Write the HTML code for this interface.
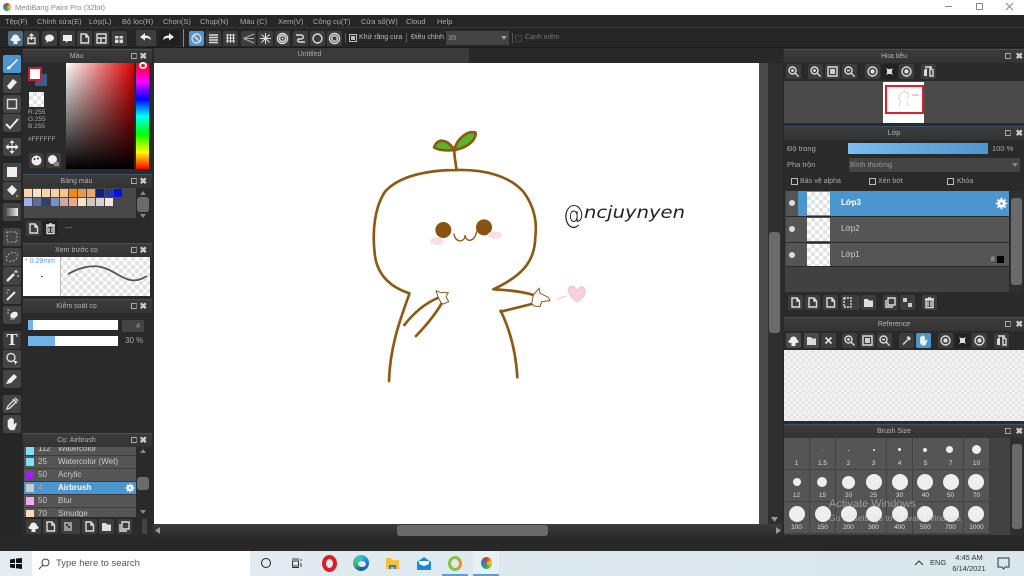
<!DOCTYPE html>
<html lang="vi"><head><meta charset="utf-8"><title>MediBang Paint Pro</title>
<style>
html,body{margin:0;padding:0;width:1024px;height:576px;overflow:hidden;background:#282828}
body{position:relative;font-family:"Liberation Sans","Noto Sans CJK SC",sans-serif;font-size:7.5px;color:#aaa}
div,span,svg{position:absolute;box-sizing:border-box}
.t{white-space:nowrap;line-height:10px}
.pt{background:linear-gradient(#3b3b3b,#343434);border-top:1px solid #3c5266;height:14px;color:#b5b5b5;text-align:center;line-height:13px;font-size:7px;padding-right:22px}
.pt.r{padding-right:20px}
.b{width:15px;height:15px;background:#3d3d3d;border-radius:2px}
.b svg{left:1px;top:1px;width:13px;height:13px}
.tb{left:3px;width:18px;height:18px;background:#444;border-radius:2px}
.tb svg{left:1px;top:1px;width:16px;height:16px}
.ic{fill:none;stroke:#ddd;stroke-width:1.4}
.ck{background-color:#fff;background-image:linear-gradient(45deg,#e2e2e2 25%,transparent 25%,transparent 75%,#e2e2e2 75%),linear-gradient(45deg,#e2e2e2 25%,transparent 25%,transparent 75%,#e2e2e2 75%);background-size:8px 8px;background-position:0 0,4px 4px}
.ck2{background-color:#f2f2f2;background-image:linear-gradient(45deg,#e6e6e6 25%,transparent 25%,transparent 75%,#e6e6e6 75%),linear-gradient(45deg,#e6e6e6 25%,transparent 25%,transparent 75%,#e6e6e6 75%);background-size:6px 6px;background-position:0 0,3px 3px}
.c{width:8px;height:8px}
.row{left:24px;width:112px;height:13px;background:#555;border-bottom:1px solid #3d3d3d;color:#ccc;font-size:8px;line-height:12px}
.row i{position:absolute;left:2px;top:2px;width:8px;height:8px}
.row b{position:absolute;left:14px;font-weight:normal}
.row u{position:absolute;left:34px;text-decoration:none;white-space:nowrap}
.lay{left:786px;width:223px;background:#555;border-bottom:1px solid #2a2a2a;color:#ccc;font-size:8px}
.eye{left:3px;width:6px;height:6px;border-radius:50%;background:#ddd}
.th{left:21px;top:1px;width:23px;height:23px}
.sb{background:#2f2f2f}
.th2{background:#6a6a6a;border-radius:3px}
.cell{width:25px;height:31px;background:#555;color:#ddd;font-size:6.5px;text-align:center}
.cell i{position:absolute;background:#eee;border-radius:50%}
.cell b{position:absolute;left:0;right:0;bottom:1px;font-weight:normal;line-height:8px}
.pop{right:15px;top:3px;width:6px;height:6px;border:1px solid #aaa;border-right-color:#777}
.xx{right:5px;top:0;color:#ccc;font-size:9px;line-height:12px;font-weight:bold}
.r .pop{right:13px}
.r .xx{right:1px}
.cb{width:7px;height:7px;border:1px solid #bbb}
</style></head><body>
<svg width="0" height="0" style="left:0;top:0">
<defs>
<symbol id="page" viewBox="0 0 13 13"><path class="ic" d="M3 2h5l2.500 3v6H3zM8 2v3h2.500"/></symbol>
<symbol id="folder" viewBox="0 0 13 13"><path d="M2 3h4l1 1.500h4V11H2z" fill="#ddd"/></symbol>
<symbol id="trash" viewBox="0 0 13 13"><path class="ic" d="M3 4h7v7.500H3zM2 3h9M5 2h3M5 5.500v4.500M8 5.500v4.500"/></symbol>
<symbol id="zin" viewBox="0 0 13 13"><circle class="ic" cx="5.500" cy="5.500" r="3.500"/><path class="ic" d="M8 8l3.500 3.500M4 5.500h3M5.500 4v3"/></symbol>
<symbol id="zout" viewBox="0 0 13 13"><circle class="ic" cx="5.500" cy="5.500" r="3.500"/><path class="ic" d="M8 8l3.500 3.500M4 5.500h3"/></symbol>
<symbol id="fit" viewBox="0 0 13 13"><path class="ic" d="M2 2h9v9H2z"/><path d="M4 4h5v5H4z" fill="#ccc"/></symbol>
<symbol id="rot" viewBox="0 0 13 13"><circle class="ic" cx="6.500" cy="6.500" r="4.500"/><circle cx="6.500" cy="6.500" r="2.200" fill="#ddd"/></symbol>
<symbol id="full" viewBox="0 0 13 13"><path d="M3 3l2 1h3l2-1-1 2v3l1 2-2-1H5l-2 1 1-2V5z" fill="#ddd"/></symbol>
<symbol id="flip" viewBox="0 0 13 13"><path d="M2 5l3-2v8H2z" fill="#ddd"/><path class="ic" d="M8 3l3 2v6H8zM3 2h7" stroke-width="1"/></symbol>
<symbol id="cloud" viewBox="0 0 13 13"><path d="M3 6a3.500 3.500 0 0 1 7 0c2 0 2 3 0 3H8.500v3h-4V9H3C1 9 1 6 3 6z" fill="#eee"/></symbol>
<symbol id="hand" viewBox="0 0 13 13"><path d="M3 6V3h1.200v2.500V2h1.300v3.500V1.500h1.300v4V2.500h1.200V7l1.500-1.500 1 .7L8.500 11.500H5L3 9z" fill="#eee"/></symbol>
<symbol id="gear" viewBox="0 0 13 13"><circle cx="6.500" cy="6.500" r="4" fill="#fff"/><path d="M6.500 .8v11.400M.8 6.500h11.400M2.500 2.500l8 8M10.500 2.500l-8 8" stroke="#fff" stroke-width="1.800"/><circle cx="6.500" cy="6.500" r="1.300" fill="#4c96d0"/></symbol>
<symbol id="x" viewBox="0 0 13 13"><path d="M3.500 3.500l6 6M9.500 3.500l-6 6" stroke="#ddd" stroke-width="1.800"/></symbol>
<symbol id="drop" viewBox="0 0 13 13"><path class="ic" d="M3 10.500l5.500-5.500M7 3l3 3M8 2.500l2.500 2.500" /></symbol>
</defs></svg>

<!-- title bar -->
<div style="left:0;top:0;width:1024px;height:15px;background:#fff"></div>
<div style="left:3px;top:3px;width:8px;height:8px;border-radius:50%;background:conic-gradient(#d33,#ec3,#3a4,#28c,#d33)"></div>
<div class="t" style="left:15px;top:3px;color:#8a8a8a;font-size:7.5px">MediBang Paint Pro (32bit)</div>
<div style="left:945px;top:6px;width:7px;height:1px;background:#888"></div>
<div style="left:976px;top:3px;width:7px;height:7px;border:1px solid #888"></div>
<svg style="left:1005px;top:2px;width:9px;height:9px"><path d="M1 1l7 7M8 1L1 8" stroke="#888" fill="none"/></svg>

<!-- menu -->
<div style="left:0;top:15px;width:1024px;height:13px;background:#262626;border-bottom:1px solid #363636"></div>
<div class="t" style="left:5px;top:17px">Tệp(F)</div>
<div class="t" style="left:37px;top:17px">Chỉnh sửa(E)</div>
<div class="t" style="left:89px;top:17px">Lớp(L)</div>
<div class="t" style="left:122px;top:17px">Bộ lọc(R)</div>
<div class="t" style="left:163px;top:17px">Chọn(S)</div>
<div class="t" style="left:200px;top:17px">Chụp(N)</div>
<div class="t" style="left:240px;top:17px">Màu (C)</div>
<div class="t" style="left:278px;top:17px">Xem(V)</div>
<div class="t" style="left:313px;top:17px">Công cụ(T)</div>
<div class="t" style="left:361px;top:17px">Cửa sổ(W)</div>
<div class="t" style="left:406px;top:17px">Cloud</div>
<div class="t" style="left:437px;top:17px">Help</div>

<!-- toolbar -->
<div style="left:0;top:28px;width:1024px;height:20px;background:#262626;border-bottom:1px solid #1c1c1c"></div>
<div class="b" style="left:8px;top:31px;background:#4a6d8c"><svg><use href="#cloud"/></svg></div>
<div class="b" style="left:24px;top:31px"><svg><path class="ic" d="M3 6h7v5.500H3zM6.500 8V2M4.500 4l2-2 2 2"/></svg></div>
<div class="b" style="left:42px;top:31px"><svg><ellipse cx="6.500" cy="6" rx="4.500" ry="3.500" fill="#eee"/><path d="M4 8l-1 3 3-2z" fill="#eee"/></svg></div>
<div class="b" style="left:60px;top:31px"><svg><path d="M2 3h9v6H7l-2 2V9H2z" fill="#eee"/></svg></div>
<div class="b" style="left:77px;top:31px"><svg><use href="#page"/></svg></div>
<div class="b" style="left:94px;top:31px"><svg><path class="ic" d="M2 2h9v9H2zM2 6h9M6 6v5" stroke-width="1"/></svg></div>
<div class="b" style="left:112px;top:31px"><svg><path d="M2 4h8v7H2z" fill="#ddd"/><path d="M2 7h8M6 4v7" stroke="#333"/></svg></div>
<div class="b" style="left:136px;top:30px;width:20px;height:16px"><svg style="left:3px"><path d="M1 6l5-4v2.500c3 0 6 1 6 5-1-2-3-2.500-6-2.500V9.500z" fill="#eee"/></svg></div>
<div class="b" style="left:159px;top:30px;width:20px;height:16px;background:#1f1f1f"><svg style="left:3px"><path d="M12 6L7 2v2.500c-3 0-6 1-6 5 1-2 3-2.500 6-2.500V9.500z" fill="#eee"/></svg></div>
<div style="left:183px;top:29px;width:1px;height:18px;background:#4c96d0"></div>
<div class="b" style="left:189px;top:31px;background:#4c96d0"><svg><circle class="ic" cx="6.500" cy="6.500" r="4.500"/><path class="ic" d="M3.500 3.500l6 6"/></svg></div>
<div class="b" style="left:206px;top:31px"><svg><path class="ic" d="M2 3h9M2 5.500h9M2 8h9M2 10.500h9" stroke="#aaa" stroke-width="1"/></svg></div>
<div class="b" style="left:223px;top:31px"><svg><path d="M2 3h9M2 6h9M2 9h9M3.500 2v9M6.500 2v9M9.500 2v9" stroke="#ddd"/></svg></div>
<div class="b" style="left:241px;top:31px"><svg><path d="M1.500 6.500L12 2M1.500 6.500H12M1.500 6.500L12 11" stroke="#aaa" fill="none"/></svg></div>
<div class="b" style="left:258px;top:31px"><svg><path d="M6.500 1v11M1 6.500h11M2.500 2.500l8 8M10.500 2.500l-8 8" stroke="#ddd"/></svg></div>
<div class="b" style="left:275px;top:31px"><svg><circle cx="6.500" cy="6.500" r="5" class="ic" stroke-width="1"/><circle cx="6.500" cy="6.500" r="3" class="ic" stroke-width="1"/><circle cx="6.500" cy="6.500" r="1" fill="#ddd"/></svg></div>
<div class="b" style="left:293px;top:31px"><svg><path class="ic" d="M2 3h5c3 0 3 4 0 4H5c-2 0-2 3 1 3h5"/></svg></div>
<div class="b" style="left:310px;top:31px"><svg><circle class="ic" cx="6.500" cy="6.500" r="4.500" stroke-width="1.800"/></svg></div>
<div class="b" style="left:327px;top:31px"><svg><circle class="ic" cx="6.500" cy="6.500" r="5" stroke-width="1"/><circle class="ic" cx="6.500" cy="6.500" r="2.800"/></svg></div>
<div style="left:345px;top:33px;width:1px;height:10px;background:#555"></div>
<div class="cb" style="left:349px;top:34px;width:8px;height:8px"></div><div style="left:351px;top:36px;width:4px;height:4px;background:#bbb"></div>
<div class="t" style="left:359px;top:33px;color:#bbb;font-size:7px">Khử răng cưa</div>
<div style="left:406px;top:33px;width:1px;height:10px;background:#555"></div>
<div class="t" style="left:411px;top:33px;color:#bbb;font-size:7px">Điều chỉnh</div>
<div class="t" style="left:446px;top:31px;width:63px;height:14px;background:#444;padding:2px;color:#999;line-height:10px">35</div>
<svg style="left:501px;top:36px;width:6px;height:4px"><path d="M0 0h6L3 4z" fill="#999"/></svg>
<div style="left:512px;top:33px;width:1px;height:10px;background:#555"></div>
<div class="cb" style="left:515px;top:35px;border-color:#444"></div>
<div class="t" style="left:525px;top:33px;color:#777;font-size:7px">Cạnh mềm</div>

<!-- canvas -->
<div style="left:154px;top:48px;width:315px;height:15px;background:#3a3a3a;color:#aaa;text-align:center;line-height:14px;font-size:7px;padding-right:4px">Untitled</div>
<div style="left:154px;top:63px;width:605px;height:461px;background:#fff"></div>
<div style="left:759px;top:63px;width:9px;height:461px;background:#4c4a46"></div>
<div class="sb" style="left:768px;top:63px;width:14px;height:461px"></div>
<div class="th2" style="left:769px;top:232px;width:11px;height:101px"></div>
<div class="sb" style="left:152px;top:524px;width:630px;height:13px;background:linear-gradient(#3c3c3c,#2a2a2a)"></div>
<div class="th2" style="left:397px;top:525px;width:151px;height:11px"></div>
<svg style="left:155px;top:527px;width:5px;height:7px"><path d="M5 0v7L0 3.500z" fill="#999"/></svg>
<svg style="left:776px;top:527px;width:5px;height:7px"><path d="M0 0v7l5-3.500z" fill="#999"/></svg>
<svg style="left:771px;top:517px;width:7px;height:5px"><path d="M0 0h7L3.500 5z" fill="#999"/></svg>

<!-- drawing -->
<svg viewBox="0 0 1020 810" style="left:360px;top:120px;width:340px;height:270px">
<g fill="none" stroke="#8c5a12" stroke-width="8" stroke-linecap="round" stroke-linejoin="round">
<path d="M148 520C100 505 50 470 44 400C36 330 45 260 75 215C120 165 210 150 290 150C380 148 450 170 490 215C520 255 532 300 526 350C525 430 480 470 400 508C440 510 490 515 520 525"/>
<path d="M148 522C120 600 90 680 87 783"/>
<path d="M422 572C450 630 468 700 472 772"/>
<path d="M422 575L515 552" />
<path d="M133 615C160 580 195 550 235 533"/>
<path d="M168 648C195 620 225 585 245 550"/>
<path d="M289 148C288 130 282 110 283 90"/>
<path d="M283 90C265 60 235 50 222 82C235 92 265 92 283 90Z" fill="#58b52c"/>
<path d="M283 90C290 55 325 30 347 38C348 65 315 85 283 90Z" fill="#58b52c"/>
</g>
<g fill="#fff" stroke="#8c5a12" stroke-width="3" stroke-linejoin="round">
<path d="M520 526L537 504L540 520L565 532L570 542L545 545L540 560L522 558L515 550Z"/>
<path d="M235 533L228 512L243 518L265 518L258 530L266 545L250 552L243 548Z"/>
</g>
<circle cx="250" cy="330" r="24" fill="#8a5210"/>
<circle cx="372" cy="322" r="24" fill="#8a5210"/>
<path d="M282 342C285 368 315 370 315 345C318 370 345 365 350 335" fill="none" stroke="#8c5a12" stroke-width="4" stroke-linecap="round"/>
<ellipse cx="231" cy="364" rx="21" ry="11" fill="#fbdfe3"/>
<ellipse cx="405" cy="345" rx="22" ry="11" fill="#fbdfe3"/>
<path d="M650 545C620 525 618 500 635 498C645 498 650 508 651 514C655 498 675 492 676 515C675 530 660 545 650 545Z" fill="#f8d0da" stroke="#f3bccb" stroke-width="2"/>
<path d="M590 538L618 528" stroke="#f3bccb" stroke-width="3"/>
</svg>
<svg style="left:555px;top:190px;width:140px;height:50px"><text x="8" y="33" font-family="'DejaVu Sans',sans-serif" font-weight="200" font-size="26" fill="#222" textLength="21" lengthAdjust="spacingAndGlyphs">@</text><text x="29" y="28" font-family="'DejaVu Sans',sans-serif" font-weight="200" font-style="italic" font-size="17" fill="#222" textLength="101" lengthAdjust="spacingAndGlyphs">ncjuynyen</text></svg>

<!-- tool strip -->
<div style="left:0;top:48px;width:22px;height:489px;background:#262626"></div>
<div class="tb" style="top:55px;background:#4c96d0"><svg viewBox="0 0 16 16"><path d="M3 13c0-2 1-3 3-3l7-7 1 1-7 7c0 2-2 3-4 2z" fill="#fff"/></svg></div>
<div class="tb" style="top:75px"><svg viewBox="0 0 16 16"><path d="M3 10l6-7 4 3-6 7H5z" fill="#eee"/></svg></div>
<div class="tb" style="top:95px"><svg viewBox="0 0 16 16"><path class="ic" d="M3.500 3.500h9v9h-9z"/></svg></div>
<div class="tb" style="top:114px"><svg viewBox="0 0 16 16"><path d="M2 9l4 4 8-9" fill="none" stroke="#eee" stroke-width="2"/></svg></div>
<div class="tb" style="top:138px"><svg viewBox="0 0 16 16"><path d="M8 1l2.500 3h-2v3h3V5l3 3-3 3V9h-3v3h2L8 15l-2.500-3h2V9h-3v2l-3-3 3-3v2h3V4h-2z" fill="#eee"/></svg></div>
<div class="tb" style="top:163px"><svg viewBox="0 0 16 16"><path d="M3 3h10v10H3z" fill="#eee"/></svg></div>
<div class="tb" style="top:182px"><svg viewBox="0 0 16 16"><path d="M3 7l5-5 5 5-4 5H8z" fill="#eee"/><path d="M13 11c1 2 1 3 0 3s-1-1 0-3z" fill="#e9a33a"/></svg></div>
<div class="tb" style="top:203px"><svg viewBox="0 0 16 16"><defs><linearGradient id="g1"><stop offset="0" stop-color="#555"/><stop offset="1" stop-color="#eee"/></linearGradient></defs><path d="M2 4h12v8H2z" fill="url(#g1)"/></svg></div>
<div class="tb" style="top:228px"><svg viewBox="0 0 16 16"><path d="M3 3h10v10H3z" fill="none" stroke="#aaa" stroke-dasharray="2 1.500"/></svg></div>
<div class="tb" style="top:248px"><svg viewBox="0 0 16 16"><ellipse cx="8" cy="8" rx="6" ry="4" transform="rotate(-25 8 8)" fill="none" stroke="#aaa" stroke-dasharray="2 1.500"/></svg></div>
<div class="tb" style="top:267px"><svg viewBox="0 0 16 16"><path d="M3 13l7-7" stroke="#eee" stroke-width="2.500"/><path d="M12 2v2M10 4h4M14 7v2" stroke="#eee"/></svg></div>
<div class="tb" style="top:286px"><svg viewBox="0 0 16 16"><path d="M3 13l8-8" stroke="#eee" stroke-width="2"/><path d="M3 3h3M2 6h2" stroke="#aaa"/></svg></div>
<div class="tb" style="top:306px"><svg viewBox="0 0 16 16"><path d="M3 3h3M3 6h2" stroke="#aaa"/><ellipse cx="10" cy="8" rx="4" ry="3" fill="#eee" transform="rotate(-30 10 8)"/><path d="M6 12h5" stroke="#aaa"/></svg></div>
<div class="tb" style="top:331px;background:#3c3c3c;color:#eee;font:bold 17px/18px 'Liberation Serif',serif;text-align:center">T</div>
<div class="tb" style="top:350px"><svg viewBox="0 0 16 16"><circle class="ic" cx="7" cy="6.500" r="4"/><path d="M9 9l5 2-2 1 0 2z" fill="#eee"/></svg></div>
<div class="tb" style="top:370px"><svg viewBox="0 0 16 16"><path d="M2 13l2-4 6-6 3 3-6 6z" fill="#eee"/></svg></div>
<div class="tb" style="top:395px"><svg viewBox="0 0 16 16"><path class="ic" d="M3 13l1-3 6-6 2 2-6 6zM9 3l4 4M11 2l3 3"/></svg></div>
<div class="tb" style="top:415px"><svg viewBox="0 0 13 13"><use href="#hand"/></svg></div>

<!-- left col -->
<div style="left:22px;top:48px;width:131px;height:489px;background:#2a2a2a"></div>

<!-- Màu -->
<div class="pt" style="left:23px;top:49px;width:129px">Màu<span class="pop"></span><span class="xx">✖</span></div>
<div style="left:66px;top:63px;width:68px;height:106px;background:linear-gradient(to top,#000,transparent),linear-gradient(to right,#fff,#e00000)"></div>
<div style="left:136px;top:63px;width:13px;height:106px;background:linear-gradient(#f00,#f0f 17%,#00f 34%,#0ff 50%,#0f0 67%,#ff0 84%,#f00)"></div>
<div style="left:139px;top:62px;width:8px;height:7px;border:2px solid #fff;border-radius:50%"></div>
<div style="left:35px;top:74px;width:12px;height:12px;background:#3f5a8a"></div>
<div style="left:28px;top:67px;width:14px;height:14px;background:#fff;border:2px solid #c8202c"></div>
<div class="ck" style="left:29px;top:92px;width:15px;height:15px"></div>
<div class="t" style="left:28px;top:109px;color:#aaa;line-height:7px;font-size:6.5px">R:255<br>G:255<br>B:255</div>
<div class="t" style="left:28px;top:135px;color:#aaa;font-size:6.5px">#FFFFFF</div>
<div class="b" style="left:29px;top:153px"><svg><circle cx="6.500" cy="6.500" r="5" fill="#eee"/><circle cx="4.500" cy="5" r="1" fill="#333"/><circle cx="8" cy="4.500" r="1" fill="#333"/></svg></div>
<div class="b" style="left:46px;top:153px"><svg><circle cx="5.500" cy="5.500" r="4.500" fill="#eee"/><path d="M7 8h5v4H7z" fill="#888"/></svg></div>

<!-- Bảng màu -->
<div class="pt" style="left:23px;top:174px;width:129px">Bảng màu<span class="pop"></span><span class="xx">✖</span></div>
<div style="left:24px;top:188px;width:112px;height:30px;background:#484848"></div>
<div class="c" style="left:24px;top:189px;background:#fcd6a6"></div><div class="c" style="left:33px;top:189px;background:#f5e2cc"></div><div class="c" style="left:42px;top:189px;background:#f8d3a8"></div><div class="c" style="left:51px;top:189px;background:#fbd09a"></div><div class="c" style="left:60px;top:189px;background:#f9c487"></div><div class="c" style="left:69px;top:189px;background:#f28a10"></div><div class="c" style="left:78px;top:189px;background:#e59a50"></div><div class="c" style="left:87px;top:189px;background:#e8a670"></div><div class="c" style="left:96px;top:189px;background:#10207c"></div><div class="c" style="left:105px;top:189px;background:#1f3aa0"></div><div class="c" style="left:114px;top:189px;background:#0a10e0"></div>
<div class="c" style="left:24px;top:198px;background:#9cb0f0"></div><div class="c" style="left:33px;top:198px;background:#5a7098"></div><div class="c" style="left:42px;top:198px;background:#2d4468"></div><div class="c" style="left:51px;top:198px;background:#7094c4"></div><div class="c" style="left:60px;top:198px;background:#d0a8a0"></div><div class="c" style="left:69px;top:198px;background:#e8a890"></div><div class="c" style="left:78px;top:198px;background:#fce4c4"></div><div class="c" style="left:87px;top:198px;background:#ccc8c4"></div><div class="c" style="left:96px;top:198px;background:#d8d0d0"></div><div class="c" style="left:105px;top:198px;background:#fde4e4"></div>
<div class="th2" style="left:137px;top:197px;width:12px;height:15px"></div>
<svg style="left:140px;top:191px;width:6px;height:4px"><path d="M3 0l3 4H0z" fill="#888"/></svg>
<svg style="left:140px;top:214px;width:6px;height:4px"><path d="M0 0h6L3 4z" fill="#888"/></svg>
<div class="b" style="left:26px;top:221px"><svg><use href="#page"/></svg></div>
<div class="b" style="left:43px;top:221px;background:#222"><svg><use href="#trash"/></svg></div>
<div class="t" style="left:65px;top:223px">---</div>

<!-- Xem trước -->
<div class="pt" style="left:23px;top:243px;width:129px">Xem trước cọ<span class="pop"></span><span class="xx">✖</span></div>
<div class="ck" style="left:23px;top:257px;width:127px;height:39px"></div>
<div style="left:23px;top:257px;width:38px;height:39px;background:#fff;border-right:1px solid #bbb"></div>
<div class="t" style="left:25px;top:257px;color:#5a9ad0;font-size:7px">* 0.29mm</div>
<div style="left:41px;top:276px;width:2px;height:1px;background:#555"></div>
<svg style="left:61px;top:257px;width:90px;height:39px"><path d="M7 17C20 10 30 8 40 10C55 13 65 28 80 22L86 19" fill="none" stroke="#555" stroke-width="1.800"/></svg>

<!-- Kiểm soát cọ -->
<div class="pt" style="left:23px;top:299px;width:129px">Kiểm soát cọ<span class="pop"></span><span class="xx">✖</span></div>
<div style="left:28px;top:320px;width:90px;height:10px;background:#fff"></div><div style="left:28px;top:320px;width:5px;height:10px;background:#6fb5ea"></div>
<div style="left:28px;top:336px;width:90px;height:10px;background:#fff"></div><div style="left:28px;top:336px;width:27px;height:10px;background:#6fb5ea"></div>
<div class="t" style="left:122px;top:320px;width:22px;height:12px;background:#444;text-align:right;padding-right:4px;line-height:12px;color:#999">4</div>
<div class="t" style="left:125px;top:336px;color:#aaa;font-size:8px">30 %</div>

<!-- Brush list -->
<div class="pt" style="left:23px;top:433px;width:129px">Cọ: Airbrush<span class="pop"></span><span class="xx">✖</span></div>
<div class="row" style="top:447px;height:9px;overflow:hidden"><i style="background:#7fe0f5;top:0"></i><b style="top:-4px">112</b><u style="top:-4px">Watercolor</u></div>
<div class="row" style="top:456px"><i style="background:#7fe0f5"></i><b>25</b><u>Watercolor (Wet)</u></div>
<div class="row" style="top:469px"><i style="background:#a020f0"></i><b>50</b><u>Acrylic</u></div>
<div class="row" style="top:482px;background:#4c96d0;color:#fff;font-weight:bold"><i style="background:#ccc"></i><b style="color:#e88">4</b><u style="font-weight:bold">Airbrush</u></div>
<svg style="left:125px;top:483px;width:10px;height:10px" viewBox="0 0 13 13"><use href="#gear"/></svg>
<div class="row" style="top:495px"><i style="background:#f5a8f5"></i><b>50</b><u>Blur</u></div>
<div class="row" style="top:508px;height:9px;overflow:hidden;border:0"><i style="background:#fcdcc0"></i><b>70</b><u>Smudge</u></div>
<div class="th2" style="left:137px;top:477px;width:12px;height:13px"></div>
<svg style="left:140px;top:449px;width:6px;height:4px"><path d="M3 0l3 4H0z" fill="#888"/></svg>
<svg style="left:140px;top:510px;width:6px;height:4px"><path d="M0 0h6L3 4z" fill="#888"/></svg>
<div class="b" style="left:26px;top:519px"><svg><use href="#cloud"/></svg></div>
<div class="b" style="left:43px;top:519px"><svg><use href="#page"/></svg></div>
<div class="b" style="left:61px;top:519px;width:19px"><svg><path d="M2 2h8v9H2z" fill="#999"/><path d="M4 4h2v2H4zM6 6h2v2H6z" fill="#333"/></svg></div>
<div class="b" style="left:82px;top:519px"><svg><use href="#page"/></svg></div>
<div class="b" style="left:99px;top:519px"><svg><use href="#folder"/></svg></div>
<div class="b" style="left:117px;top:519px"><svg><path class="ic" d="M4 2h7v7H4zM2 4v7h7" stroke-width="1"/></svg></div>
<div style="left:142px;top:519px;width:5px;height:15px;background:#444"></div>

<!-- right col -->
<div style="left:782px;top:48px;width:242px;height:489px;background:#2a2a2a"></div>

<!-- Navigator -->
<div class="pt r" style="left:784px;top:49px;width:240px">Hoa tiêu<span class="pop"></span><span class="xx">✖</span></div>
<div class="b" style="left:786px;top:64px"><svg><use href="#zin"/></svg></div>
<div class="b" style="left:808px;top:64px"><svg><use href="#zin"/></svg></div>
<div class="b" style="left:825px;top:64px"><svg><use href="#fit"/></svg></div>
<div class="b" style="left:842px;top:64px"><svg><use href="#zout"/></svg></div>
<div class="b" style="left:865px;top:64px"><svg><use href="#rot"/></svg></div>
<div class="b" style="left:882px;top:64px;background:#222"><svg><use href="#full"/></svg></div>
<div class="b" style="left:899px;top:64px"><svg><use href="#rot"/></svg></div>
<div class="b" style="left:921px;top:64px"><svg><use href="#flip"/></svg></div>
<div style="left:784px;top:81px;width:240px;height:42px;background:#4a4a4a"></div>
<div style="left:883px;top:82px;width:41px;height:41px;background:#fff"></div>
<svg viewBox="0 0 1020 810" style="left:897px;top:88px;width:24px;height:19px"><path d="M148 520C50 470 20 260 290 150C480 150 560 350 400 508M148 522L87 783M422 572L472 772" fill="none" stroke="#c8b080" stroke-width="22"/><path d="M640 300h300" stroke="#d88" stroke-width="40"/></svg>
<div style="left:885px;top:85px;width:39px;height:29px;border:2px solid #d9202c"></div>

<!-- Layer -->
<div class="pt r" style="left:784px;top:126px;width:240px">Lớp<span class="pop"></span><span class="xx">✖</span></div>
<div class="t" style="left:787px;top:144px">Độ trong</div>
<div style="left:848px;top:143px;width:140px;height:11px;background:linear-gradient(90deg,#79bdf2,#4c96d0)"></div>
<div class="t" style="left:992px;top:144px">100 %</div>
<div class="t" style="left:787px;top:160px">Pha trộn</div>
<div class="t" style="left:849px;top:158px;width:171px;height:14px;background:#444;padding:2px 1px;color:#999;line-height:10px">Bình thường</div>
<svg style="left:1012px;top:163px;width:6px;height:4px"><path d="M0 0h6L3 4z" fill="#888"/></svg>
<div class="cb" style="left:791px;top:178px"></div><div class="t" style="left:800px;top:177px;font-size:7px">Bảo vệ alpha</div>
<div class="cb" style="left:869px;top:178px"></div><div class="t" style="left:878px;top:177px;font-size:7px">Xén bớt</div>
<div class="cb" style="left:947px;top:178px"></div><div class="t" style="left:957px;top:177px;font-size:7px">Khóa</div>
<div style="left:785px;top:191px;width:224px;height:101px;background:#414141"></div>

<div class="lay" style="top:191px;height:26px"><div class="eye" style="top:9px"></div><div style="left:12px;top:0;width:211px;height:25px;background:#4c96d0"></div><div class="ck th"></div><div class="t" style="left:55px;top:7px;color:#fff;font-weight:bold">Lớp3</div><svg style="left:209px;top:6px;width:13px;height:13px"><use href="#gear"/></svg></div>
<div class="lay" style="top:217px;height:26px"><div class="eye" style="top:9px"></div><div class="ck th"></div><div class="t" style="left:55px;top:7px">Lớp2</div></div>
<div class="lay" style="top:243px;height:24px"><div class="eye" style="top:9px"></div><div class="ck th" style="height:22px"></div><div class="t" style="left:55px;top:7px">Lớp1</div><div class="t" style="left:205px;top:12px;font-size:6.500px">8</div><div style="left:211px;top:13px;width:7px;height:7px;background:#000"></div></div>
<div class="sb" style="left:1010px;top:191px;width:13px;height:102px"></div>
<div class="th2" style="left:1011px;top:198px;width:11px;height:87px"></div>
<div class="b" style="left:788px;top:295px"><svg><use href="#page"/></svg></div>
<div class="b" style="left:805px;top:295px"><svg><use href="#page"/></svg></div>
<div class="b" style="left:823px;top:295px"><svg><use href="#page"/></svg></div>
<div class="b" style="left:841px;top:295px;width:19px"><svg><path class="ic" d="M2 2h7v9H2z" stroke-dasharray="2 1"/></svg></div>
<div class="b" style="left:861px;top:295px"><svg><use href="#folder"/></svg></div>
<div class="b" style="left:883px;top:295px"><svg><path class="ic" d="M4 2h7v7H4zM2 4v7h7" stroke-width="1"/></svg></div>
<div class="b" style="left:900px;top:295px"><svg><path d="M2 2h4v4H2zM7 7h4v4H7z" fill="#ccc"/></svg></div>
<div class="b" style="left:922px;top:295px"><svg><use href="#trash"/></svg></div>

<!-- Reference -->
<div class="pt r" style="left:784px;top:317px;width:240px">Reference<span class="pop"></span><span class="xx">✖</span></div>
<div class="b" style="left:786px;top:333px;background:#4a4a4a"><svg><use href="#cloud"/></svg></div>
<div class="b" style="left:804px;top:333px;background:#4a4a4a"><svg><use href="#folder"/></svg></div>
<div class="b" style="left:821px;top:333px"><svg><use href="#x"/></svg></div>
<div class="b" style="left:842px;top:333px"><svg><use href="#zin"/></svg></div>
<div class="b" style="left:860px;top:333px"><svg><use href="#fit"/></svg></div>
<div class="b" style="left:877px;top:333px"><svg><use href="#zout"/></svg></div>
<div class="b" style="left:899px;top:333px"><svg><use href="#drop"/></svg></div>
<div class="b" style="left:916px;top:333px;background:#4c96d0"><svg><use href="#hand"/></svg></div>
<div class="b" style="left:938px;top:333px"><svg><use href="#rot"/></svg></div>
<div class="b" style="left:955px;top:333px;background:#222"><svg><use href="#full"/></svg></div>
<div class="b" style="left:972px;top:333px"><svg><use href="#rot"/></svg></div>
<div class="b" style="left:994px;top:333px"><svg><use href="#flip"/></svg></div>
<div class="ck2" style="left:784px;top:350px;width:240px;height:71px"></div>

<!-- Brush Size -->
<div class="pt r" style="left:784px;top:424px;width:240px">Brush Size<span class="pop"></span><span class="xx">✖</span></div>
<div style="left:784px;top:438px;width:226px;height:97px;background:#424242"></div>

<div class="cell" style="left:784px;top:438px"><b>1</b></div>
<div class="cell" style="left:810px;top:438px"><i style="left:12px;top:12px;width:1px;height:1px;background:#888"></i><b>1.5</b></div>
<div class="cell" style="left:836px;top:438px"><i style="left:12px;top:12px;width:2px;height:1px;background:#aaa"></i><b>2</b></div>
<div class="cell" style="left:861px;top:438px"><i style="left:12px;top:11px;width:2px;height:2px"></i><b>3</b></div>
<div class="cell" style="left:887px;top:438px"><i style="left:11px;top:10px;width:3px;height:3px"></i><b>4</b></div>
<div class="cell" style="left:913px;top:438px"><i style="left:10px;top:10px;width:4px;height:4px"></i><b>5</b></div>
<div class="cell" style="left:938px;top:438px"><i style="left:8px;top:8px;width:7px;height:7px"></i><b>7</b></div>
<div class="cell" style="left:964px;top:438px"><i style="left:8px;top:7px;width:9px;height:9px"></i><b>10</b></div>

<div class="cell" style="left:784px;top:470px"><i style="left:9px;top:8px;width:8px;height:8px"></i><b>12</b></div>
<div class="cell" style="left:810px;top:470px"><i style="left:7px;top:7px;width:10px;height:10px"></i><b>15</b></div>
<div class="cell" style="left:836px;top:470px"><i style="left:6px;top:6px;width:13px;height:13px"></i><b>20</b></div>
<div class="cell" style="left:861px;top:470px"><i style="left:5px;top:4px;width:16px;height:16px"></i><b>25</b></div>
<div class="cell" style="left:887px;top:470px"><i style="left:5px;top:4px;width:16px;height:16px"></i><b>30</b></div>
<div class="cell" style="left:913px;top:470px"><i style="left:4px;top:4px;width:16px;height:16px"></i><b>40</b></div>
<div class="cell" style="left:938px;top:470px"><i style="left:5px;top:4px;width:16px;height:16px"></i><b>50</b></div>
<div class="cell" style="left:964px;top:470px"><i style="left:4px;top:4px;width:16px;height:16px"></i><b>70</b></div>

<div class="cell" style="left:784px;top:502px"><i style="left:5px;top:4px;width:16px;height:16px"></i><b>100</b></div>
<div class="cell" style="left:810px;top:502px"><i style="left:5px;top:4px;width:16px;height:16px"></i><b>150</b></div>
<div class="cell" style="left:836px;top:502px"><i style="left:5px;top:4px;width:16px;height:16px"></i><b>200</b></div>
<div class="cell" style="left:861px;top:502px"><i style="left:5px;top:4px;width:16px;height:16px"></i><b>300</b></div>
<div class="cell" style="left:887px;top:502px"><i style="left:5px;top:4px;width:16px;height:16px"></i><b>400</b></div>
<div class="cell" style="left:913px;top:502px"><i style="left:4px;top:4px;width:16px;height:16px"></i><b>500</b></div>
<div class="cell" style="left:938px;top:502px"><i style="left:5px;top:4px;width:16px;height:16px"></i><b>700</b></div>
<div class="cell" style="left:964px;top:502px"><i style="left:4px;top:4px;width:16px;height:16px"></i><b>1000</b></div>

<div class="sb" style="left:1010px;top:438px;width:13px;height:97px"></div>
<div class="th2" style="left:1012px;top:444px;width:10px;height:85px"></div>

<div class="t" style="left:829px;top:498px;font-size:11px;line-height:13px;color:rgba(215,215,215,.55)">Activate Windows</div>
<div class="t" style="left:829px;top:513px;font-size:8.500px;line-height:11px;color:rgba(215,215,215,.55)">Go to Settings to activate Windows.</div>

<!-- taskbar -->
<div style="left:0;top:551px;width:1024px;height:25px;background:linear-gradient(90deg,#e6edf2,#dde9ee 50%,#d9e7ec)"></div>
<svg style="left:10px;top:558px;width:12px;height:11px"><path d="M0 1.500l5-.8V5H0zM6 .5l6-.5v5H6zM0 6h5v4.300l-5-.8zM6 6h6v5l-6-.7z" fill="#111"/></svg>
<div style="left:32px;top:551px;width:218px;height:25px;background:#fff"></div>
<svg style="left:38px;top:558px;width:12px;height:12px"><circle cx="7.500" cy="4.500" r="3.500" fill="none" stroke="#444"/><path d="M5 7l-4 4" stroke="#444"/></svg>
<div class="t" style="left:56px;top:558px;font-size:9.500px;line-height:12px;color:#555">Type here to search</div>
<div style="left:261px;top:558px;width:10px;height:10px;border:1.500px solid #222;border-radius:50%"></div>
<svg style="left:291px;top:557px;width:12px;height:12px"><path d="M1 2h7M1 10.500h7M1.500 4h6v5h-6zM10 2v2M10 6v4" fill="none" stroke="#333"/></svg>
<div style="left:322px;top:555px;width:15px;height:17px;border:4px solid #d8202c;border-radius:50%"></div>
<div style="left:353px;top:555px;width:16px;height:16px;border-radius:50%;background:conic-gradient(#38c0d8,#1c78c8,#1a5aa8,#40c070,#38c0d8)"></div>
<div style="left:358px;top:561px;width:8px;height:6px;border-radius:50%;background:#e2ebf0"></div>
<svg style="left:385px;top:556px;width:15px;height:15px"><path d="M1 2h5l1 2h7v3H1z" fill="#f5c33b"/><path d="M1 6h13v7H1z" fill="#f0c040"/><path d="M4 9h7v4H9v-2H6v2H4z" fill="#2a80c8"/></svg>
<svg style="left:416px;top:556px;width:16px;height:15px"><path d="M1 6l7-5 7 5v8H1z" fill="#1c8ad0"/><path d="M3 5h10v3L8 10 3 8z" fill="#fff"/></svg>
<div style="left:448px;top:556px;width:14px;height:15px;border-radius:50%;border:3px solid #8cc040;border-right-color:#e89030"></div>
<div style="left:442px;top:574px;width:26px;height:2px;background:#5aa0d8"></div>
<div style="left:473px;top:574px;width:26px;height:2px;background:#5aa0d8"></div>
<div style="left:473px;top:551px;width:26px;height:23px;background:rgba(255,255,255,.35)"></div>
<div style="left:481px;top:557px;width:11px;height:12px;border-radius:50%;background:conic-gradient(#d33,#ec3,#3a4,#28c,#d33)"></div>

<svg style="left:914px;top:560px;width:10px;height:6px"><path d="M1 5l4-4 4 4" fill="none" stroke="#333"/></svg>
<div class="t" style="left:930px;top:558px;font-size:7.500px;line-height:10px;color:#333">ENG</div>
<div class="t" style="left:950px;top:552px;width:38px;text-align:center;font-size:7.500px;line-height:11px;color:#333">4:45 AM<br>6/14/2021</div>
<svg style="left:997px;top:557px;width:13px;height:13px"><path d="M1 1h11v9H8l-1.500 2L5 10H1z" fill="none" stroke="#333"/></svg>
</body></html>
